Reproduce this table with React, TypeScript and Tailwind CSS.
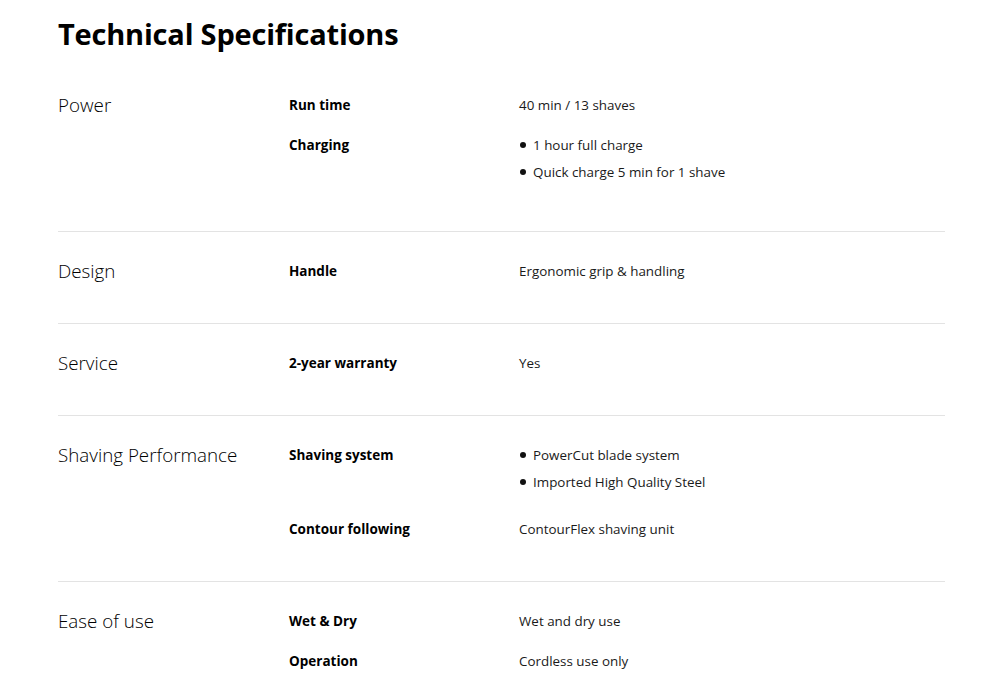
import React from 'react';

type Row = { label: string; value: string | string[] };
type Section = { title: string; rows: Row[] };

const sections: Section[] = [
  {
    title: 'Power',
    rows: [
      { label: 'Run time', value: '40 min / 13 shaves' },
      { label: 'Charging', value: ['1 hour full charge', 'Quick charge 5 min for 1 shave'] },
    ],
  },
  { title: 'Design', rows: [{ label: 'Handle', value: 'Ergonomic grip & handling' }] },
  { title: 'Service', rows: [{ label: '2-year warranty', value: 'Yes' }] },
  {
    title: 'Shaving Performance',
    rows: [
      { label: 'Shaving system', value: ['PowerCut blade system', 'Imported High Quality Steel'] },
      { label: 'Contour following', value: 'ContourFlex shaving unit' },
    ],
  },
  {
    title: 'Ease of use',
    rows: [
      { label: 'Wet & Dry', value: 'Wet and dry use' },
      { label: 'Operation', value: 'Cordless use only' },
    ],
  },
];

function SpecRow({ row }: { row: Row }) {
  return (
    <div className="flex">
      <div className="w-[230px] shrink-0 text-[13.5px] leading-5 font-bold text-black">{row.label}</div>
      <div className="flex-1 text-[13.4px] leading-5 text-[#1a1a1a]">
        {Array.isArray(row.value) ? (
          <ul>
            {row.value.map((v) => (
              <li key={v} className="mb-[7px] flex items-center">
                <span className="mr-[7px] ml-[1px] inline-block h-[6px] w-[6px] rounded-full bg-[#111]" />
                {v}
              </li>
            ))}
          </ul>
        ) : (
          row.value
        )}
      </div>
    </div>
  );
}

export default function App() {
  return (
    <div className="min-h-[685px] bg-white font-['Open_Sans','Noto_Sans',sans-serif]">
      <div className="ml-[58px] w-[887px] pt-[14px]">
        <h1 className="text-[29px] leading-10 font-bold tracking-[-0.2px] text-black">Technical Specifications</h1>
        <div className="mt-[10px]">
          {sections.map((s, i) => (
            <div key={s.title} className={`flex pb-[42px] ${i === 0 ? 'pt-[31px]' : 'border-t border-[#e3e3e3] pt-[29px]'}`}>
              <div className="w-[231px] shrink-0 text-[18.8px] leading-5 font-light text-black">{s.title}</div>
              <div className="flex flex-1 flex-col gap-5">
                {s.rows.map((r) => (
                  <SpecRow key={r.label} row={r} />
                ))}
              </div>
            </div>
          ))}
        </div>
      </div>
    </div>
  );
}
